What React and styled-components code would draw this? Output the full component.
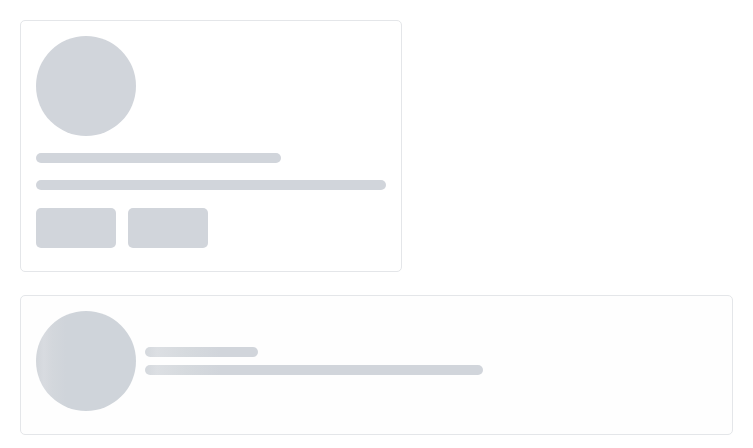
import React from "react";
import styled, { createGlobalStyle, css } from "styled-components";

const Global = createGlobalStyle`
  html, body { margin: 0; padding: 0; background: #ffffff; }
  body { font-family: "Liberation Sans", Arial, sans-serif; }
`;

const Page = styled.div`
  padding: 20px;
  display: flex;
  flex-direction: column;
  align-items: flex-start;
  gap: 23px;
`;

const Card = styled.div`
  box-sizing: border-box;
  background: ${(p) => (p.$tint ? "#fefefe" : "#ffffff")};
  border: 1px solid #e4e6e9;
  border-radius: 5px;
  padding: 15px 15px ${(p) => p.$bottom}px;
  width: ${(p) => p.$width};
`;

const shimmer = css`
  background: linear-gradient(
    90deg,
    #d4d8dd 0px,
    #dcdfe3 12px,
    #d6dade 40px,
    #d1d5db 75px,
    #d1d5db 100%
  );
`;

const Circle = styled.div`
  width: 100px;
  height: 100px;
  border-radius: 50%;
  flex-shrink: 0;
  background: #d1d5db;
  ${(p) =>
    p.$shimmer &&
    css`
      background: linear-gradient(
        90deg,
        #d2d6db 0px,
        #d8dbe0 8px,
        #d3d7dc 16px,
        #cfd4da 30px,
        #cfd4da 100%
      );
    `}
`;

const Bar = styled.div`
  height: 10px;
  border-radius: 5px;
  width: ${(p) => p.$width}px;
  margin-top: ${(p) => p.$top || 0}px;
  background: #d1d5db;
  ${(p) => p.$shimmer && shimmer}
`;

const Buttons = styled.div`
  display: flex;
  gap: 12px;
  margin-top: 18px;
`;

const ButtonBlock = styled.div`
  width: 80px;
  height: 40px;
  border-radius: 5px;
  background: #d1d5db;
`;

const Stack = styled.div`
  display: flex;
  flex-direction: column;
`;

const Row = styled.div`
  display: flex;
  align-items: center;
  gap: 9px;
`;

const Lines = styled.div`
  display: flex;
  flex-direction: column;
  gap: 8px;
  margin-top: -1px;
`;

export default function App() {
  return (
    <>
      <Global />
      <Page>
        <Card $width="382px" $bottom={23}>
          <Stack>
            <Circle />
            <Bar $width={245} $top={17} />
            <Bar $width={350} $top={17} />
            <Buttons>
              <ButtonBlock />
              <ButtonBlock />
            </Buttons>
          </Stack>
        </Card>
        <Card $width="100%" $bottom={23} $tint>
          <Row>
            <Circle $shimmer />
            <Lines>
              <Bar $width={113} $shimmer />
              <Bar $width={338} $shimmer />
            </Lines>
          </Row>
        </Card>
      </Page>
    </>
  );
}
